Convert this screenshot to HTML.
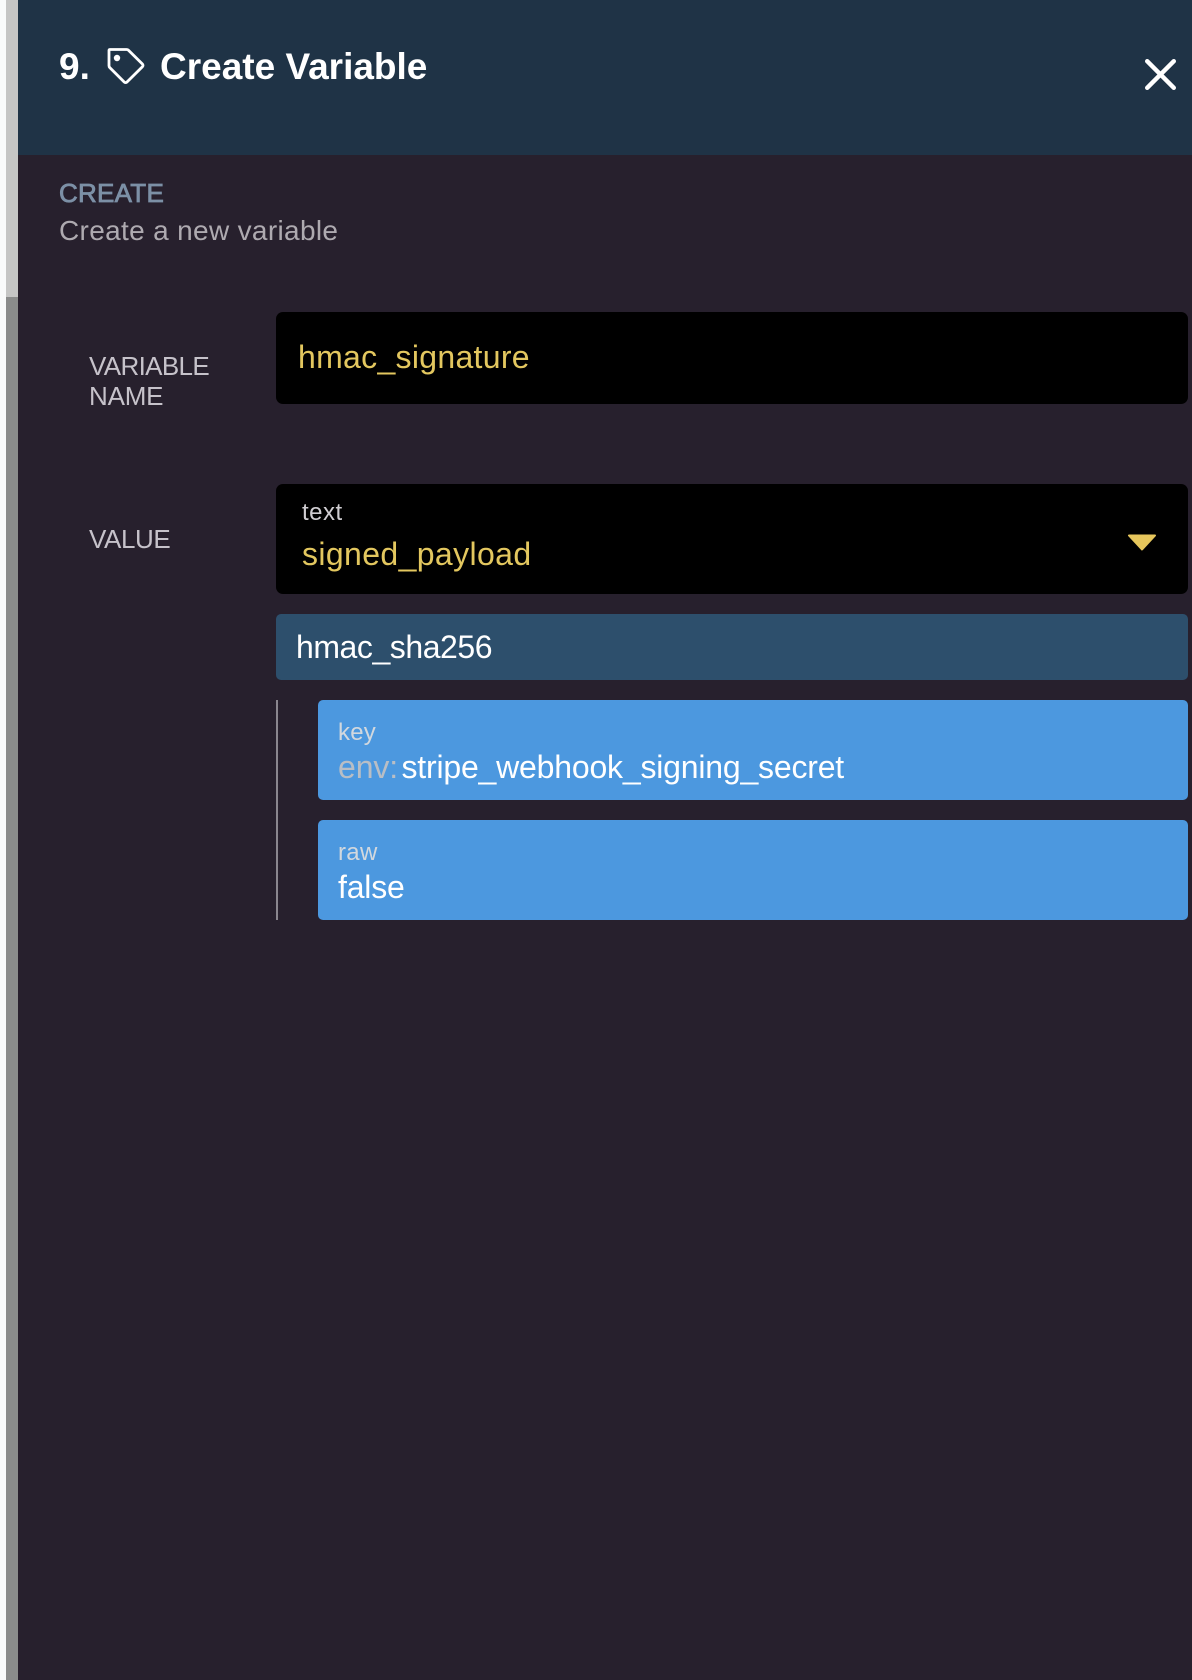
<!DOCTYPE html>
<html lang="en">
<head>
<meta charset="utf-8">
<title>Create Variable</title>
<style>
html,body{margin:0;padding:0;background:#f9fbfb}
body{position:relative;width:1192px;height:1680px;overflow:hidden;font-family:"Liberation Sans",Arial,sans-serif}
.b{position:absolute}
.t{position:absolute;line-height:0;white-space:nowrap}
</style>
</head>
<body>
<div class="b" style="left:6px;top:0;width:12px;height:297px;background:#c5c6c5"></div>
<div class="b" style="left:6px;top:297px;width:12px;height:1383px;background:#8a8c8b"></div>
<div class="b" style="left:18px;top:0;width:1174px;height:1680px;background:#27202d"></div>
<div class="b" style="left:18px;top:0;width:1174px;height:155px;background:#1f3346"></div>

<div class="t" style="left:59px;top:67px;font-size:37px;font-weight:700;color:#fff">9.</div>
<svg class="b" style="left:100px;top:40px" width="52" height="52" viewBox="100 40 52 52" fill="none" stroke="#fff" stroke-width="2.8" stroke-linejoin="round">
<path d="M110 49.5H126.5C127.4 49.5 128 49.8 128.6 50.4L142.4 64C143.2 64.8 143.2 66 142.4 66.8L127 82C126.2 82.8 125 82.8 124.2 82L109.8 67.6C109.2 67 109 66.4 109 65.6V50.5C109 49.9 109.4 49.5 110 49.5Z"/>
<circle cx="117" cy="58" r="3.2" fill="#fff" stroke="none"/>
</svg>
<div class="t" style="left:160px;top:67px;font-size:37px;font-weight:700;color:#fff">Create Variable</div>
<svg class="b" style="left:1140px;top:54px" width="42" height="42" viewBox="1140 54 42 42" stroke="#fff" stroke-width="4.4" stroke-linecap="round"><path d="M1147.2 61.2L1173.8 87.8M1173.8 61.2L1147.2 87.8"/></svg>

<div class="t" style="left:59px;top:193px;font-size:26px;letter-spacing:.25px;color:#7c90a6;-webkit-text-stroke:.8px #7c90a6">CREATE</div>
<div class="t" style="left:59px;top:231.3px;font-size:28px;letter-spacing:.33px;color:#aeaab0">Create a new variable</div>

<div class="t" style="left:89px;top:366px;font-size:26px;letter-spacing:-.65px;color:#c6c2ca">VARIABLE</div>
<div class="t" style="left:89px;top:396px;font-size:26px;letter-spacing:-.2px;color:#c6c2ca">NAME</div>
<div class="t" style="left:89px;top:539px;font-size:26px;letter-spacing:-.4px;color:#c6c2ca">VALUE</div>

<div class="b" style="left:276px;top:312px;width:912px;height:92px;background:#000;border-radius:7px"></div>
<div class="t" style="left:298px;top:357px;font-size:32px;letter-spacing:.3px;color:#e3c75f">hmac_signature</div>

<div class="b" style="left:276px;top:484px;width:912px;height:110px;background:#000;border-radius:7px"></div>
<div class="t" style="left:302px;top:513px;font-size:24px;letter-spacing:.5px;color:#d0ced2">text</div>
<div class="t" style="left:302px;top:554px;font-size:32px;letter-spacing:.38px;color:#e3c75f">signed_payload</div>
<svg class="b" style="left:1126px;top:532px" width="32" height="20" viewBox="1126 532 32 20" fill="#e6c65c" stroke="#e6c65c" stroke-width="2" stroke-linejoin="round"><path d="M1129 535.5H1155L1142 549.5Z"/></svg>

<div class="b" style="left:276px;top:614px;width:912px;height:66px;background:#2d4f6c;border-radius:5px"></div>
<div class="t" style="left:296px;top:647px;font-size:32px;letter-spacing:-.45px;color:#fff">hmac_sha256</div>

<div class="b" style="left:276px;top:700px;width:2px;height:220px;background:#8a868e"></div>

<div class="b" style="left:318px;top:700px;width:870px;height:100px;background:#4c98df;border-radius:5px"></div>
<div class="t" style="left:338px;top:733px;font-size:24px;letter-spacing:.2px;color:#d2d8de">key</div>
<div class="t" style="left:338px;top:767px;font-size:32px;letter-spacing:-.1px;color:#b9bec5">env:</div>
<div class="t" style="left:401.5px;top:767px;font-size:32px;letter-spacing:-.2px;color:#fff">stripe_webhook_signing_secret</div>

<div class="b" style="left:318px;top:820px;width:870px;height:100px;background:#4c98df;border-radius:5px"></div>
<div class="t" style="left:338px;top:852.7px;font-size:24px;letter-spacing:.3px;color:#d2d8de">raw</div>
<div class="t" style="left:338px;top:887px;font-size:32px;letter-spacing:-.2px;color:#fff">false</div>
</body>
</html>
